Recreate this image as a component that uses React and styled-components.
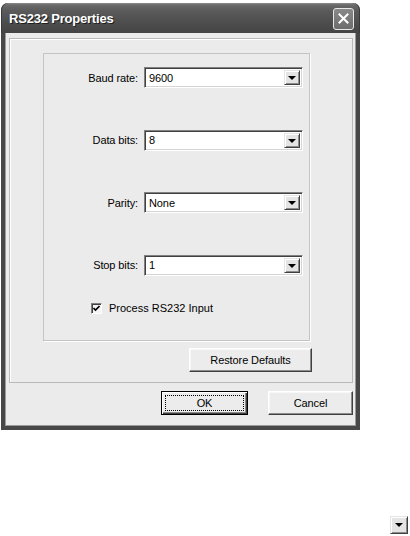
import React from 'react';
import styled, { createGlobalStyle } from 'styled-components';

const GlobalStyle = createGlobalStyle`
  html, body {
    margin: 0;
    padding: 0;
    background: #ffffff;
  }
  body {
    font-family: "Liberation Sans", Arial, sans-serif;
    font-size: 11px;
    color: #000;
  }
`;

const Page = styled.div`
  width: 410px;
  height: 536px;
  display: flex;
  flex-direction: column;
  padding: 3px 0 0 1px;
  box-sizing: border-box;
`;

const Dialog = styled.div`
  width: 359px;
  display: flex;
  flex-direction: column;
`;

const TitleBar = styled.div`
  height: 30px;
  display: flex;
  align-items: center;
  justify-content: space-between;
  padding: 0 6px 0 8px;
  border-radius: 7px 7px 0 0;
  background: linear-gradient(
    to bottom,
    #8c8c8c 0px,
    #6a6a6a 2px,
    #5a5a5a 8px,
    #4f4f4f 18px,
    #444444 30px
  );
  box-shadow: inset 1px 0 0 #3a3a3a, inset -1px 0 0 #3a3a3a;
`;

const Title = styled.span`
  font-family: "Liberation Sans", Arial, sans-serif;
  font-weight: bold;
  font-size: 13px;
  letter-spacing: -0.2px;
  color: #ffffff;
  text-shadow: 1px 1px 0 #1e1e1e;
  margin-top: 1px;
`;

const CloseButton = styled.div`
  width: 19px;
  height: 20px;
  border: 1px solid #e8e8e8;
  border-radius: 3px;
  background: linear-gradient(to bottom, #8a8a8a, #6c6c6c);
  display: flex;
  align-items: center;
  justify-content: center;
  margin-top: 1px;
`;

const Body = styled.div`
  background: #ebebeb;
  border: 4px solid #474747;
  border-top: none;
  box-shadow: inset 1px 0 0 #9a9a9a, inset -1px 0 0 #9a9a9a, inset 0 -1px 0 #9a9a9a;
  padding: 5px 3px 11px 4px;
  display: flex;
  flex-direction: column;
`;

const Panel = styled.div`
  border: 1px solid #b9b9b9;
  box-shadow: inset 1px 1px 0 #ffffff;
  padding: 14px 42px 10px 33px;
  display: flex;
  flex-direction: column;
`;

const Group = styled.div`
  border: 1px solid #c4c4c4;
  box-shadow: 1px 1px 0 #ffffff;
  padding: 13px 8px 25px 6px;
  display: flex;
  flex-direction: column;
`;

const Fields = styled.div`
  display: grid;
  grid-template-columns: 88px 159px;
  grid-auto-rows: 21px;
  column-gap: 6px;
  row-gap: 41.5px;
  align-items: center;
`;

const Label = styled.label`
  text-align: right;
  font-size: 11px;
  letter-spacing: -0.1px;
  color: #000;
`;

const Combo = styled.div`
  height: 21px;
  box-sizing: border-box;
  display: flex;
  align-items: stretch;
  background: #ffffff;
  border-top: 1px solid #808080;
  border-left: 1px solid #808080;
  border-right: 1px solid #ffffff;
  border-bottom: 1px solid #ffffff;
  box-shadow: inset 1px 1px 0 #404040, inset -1px -1px 0 #d4d4d4;
  padding: 2px;
`;

const ComboValue = styled.span`
  flex: 1;
  display: flex;
  align-items: center;
  padding-left: 2px;
  font-size: 11px;
  letter-spacing: -0.1px;
`;

const ArrowButton = styled.div`
  width: ${({ $size }) => $size || 16}px;
  height: ${({ $size }) => ($size ? `${$size}px` : 'auto')};
  box-sizing: border-box;
  background: #e4e4e4;
  border-top: 1px solid #e4e4e4;
  border-left: 1px solid #e4e4e4;
  border-right: 1px solid #404040;
  border-bottom: 1px solid #404040;
  box-shadow: inset 1px 1px 0 #ffffff, inset -1px -1px 0 #8c8c8c;
  display: flex;
  align-items: center;
  justify-content: center;
`;

const Arrow = styled.span`
  width: 0;
  height: 0;
  border-left: 4px solid transparent;
  border-right: 4px solid transparent;
  border-top: 4px solid #000;
  margin-top: 1px;
`;

const CheckRow = styled.div`
  display: flex;
  align-items: center;
  gap: 7px;
  padding-left: 41px;
  margin-top: 26px;
  height: 13px;
`;

const CheckBox = styled.span`
  width: 11px;
  height: 11px;
  box-sizing: border-box;
  background: #f4f4f4;
  border-top: 1px solid #808080;
  border-left: 1px solid #808080;
  border-right: 1px solid #ffffff;
  border-bottom: 1px solid #ffffff;
  box-shadow: inset 1px 1px 0 #404040;
  display: flex;
  align-items: center;
  justify-content: center;
`;

const ButtonRow = styled.div`
  display: flex;
  justify-content: flex-end;
  gap: ${({ $gap }) => $gap || 0}px;
  margin-top: ${({ $top }) => $top || 0}px;
  margin-right: ${({ $right }) => $right || 0}px;
`;

const Button = styled.div`
  width: ${({ $w }) => $w}px;
  height: 24px;
  box-sizing: border-box;
  background: #ececec;
  border-top: 1px solid #ffffff;
  border-left: 1px solid #ffffff;
  border-right: 1px solid #404040;
  border-bottom: 1px solid #404040;
  box-shadow: inset -1px -1px 0 #8c8c8c, inset 1px 1px 0 #f8f8f8;
  display: flex;
  align-items: center;
  justify-content: center;
  font-size: 11px;
  letter-spacing: -0.1px;
  ${({ $default }) =>
    $default &&
    `
    border: 1px solid #000;
    box-shadow: inset 1px 1px 0 #ffffff, inset -1px -1px 0 #404040, inset -2px -2px 0 #8c8c8c;
  `}
`;

const FocusRing = styled.span`
  position: absolute;
  inset: 3px;
  border: 1px dotted #000;
`;

const ButtonInner = styled.span`
  position: relative;
  width: 100%;
  height: 100%;
  display: flex;
  align-items: center;
  justify-content: center;
`;

const Stray = styled.div`
  display: flex;
  justify-content: flex-end;
  margin-top: 86px;
  padding-right: 2px;
`;

const fields = [
  { label: 'Baud rate:', value: '9600' },
  { label: 'Data bits:', value: '8' },
  { label: 'Parity:', value: 'None' },
  { label: 'Stop bits:', value: '1' },
];

export default function App() {
  return (
    <>
      <GlobalStyle />
      <Page>
        <Dialog>
          <TitleBar>
            <Title>RS232 Properties</Title>
            <CloseButton>
              <svg width="11" height="11" viewBox="0 0 11 11">
                <path d="M1.5 1.5 L9.5 9.5 M9.5 1.5 L1.5 9.5" stroke="#fff" strokeWidth="2" strokeLinecap="square" />
              </svg>
            </CloseButton>
          </TitleBar>
          <Body>
            <Panel>
              <Group>
                <Fields>
                  {fields.map((f) => (
                    <React.Fragment key={f.label}>
                      <Label>{f.label}</Label>
                      <Combo>
                        <ComboValue>{f.value}</ComboValue>
                        <ArrowButton>
                          <Arrow />
                        </ArrowButton>
                      </Combo>
                    </React.Fragment>
                  ))}
                </Fields>
                <CheckRow>
                  <CheckBox>
                    <svg width="7" height="7" viewBox="0 0 7 7">
                      <path d="M0.5 3 L2.5 5 L6.5 1" stroke="#000" strokeWidth="1.6" fill="none" />
                    </svg>
                  </CheckBox>
                  <span>Process RS232 Input</span>
                </CheckRow>
              </Group>
              <ButtonRow $top={7} $right={-2}>
                <Button $w={123}>Restore Defaults</Button>
              </ButtonRow>
            </Panel>
            <ButtonRow $top={8} $gap={20}>
              <Button $w={87} $default>
                <ButtonInner>
                  <FocusRing />
                  OK
                </ButtonInner>
              </Button>
              <Button $w={85}>Cancel</Button>
            </ButtonRow>
          </Body>
        </Dialog>
        <Stray>
          <ArrowButton $size={18}>
            <Arrow />
          </ArrowButton>
        </Stray>
      </Page>
    </>
  );
}
